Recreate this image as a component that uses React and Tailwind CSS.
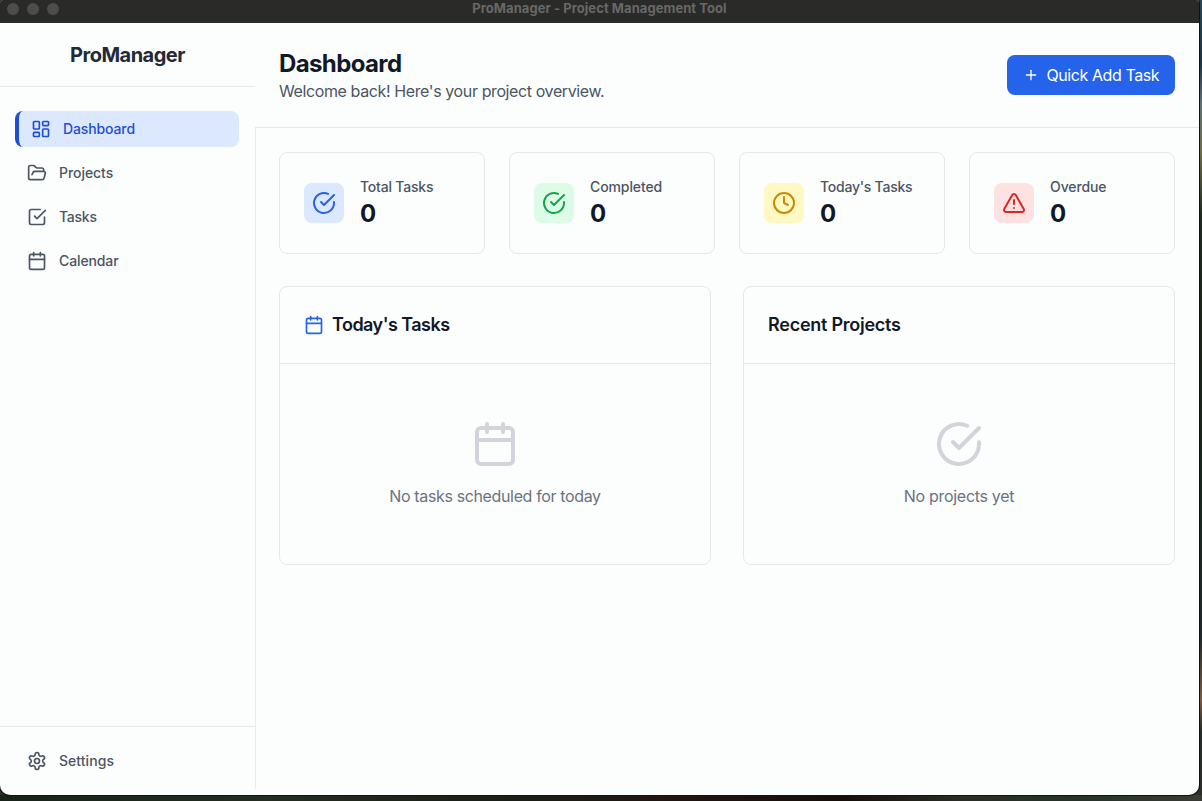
import React from "react";
import { LayoutDashboard, FolderOpen, Calendar, Plus } from "lucide-react";

function Svg({ size = 20, className = "", children }) {
  return (
    <svg width={size} height={size} viewBox="0 0 24 24" fill="none" stroke="currentColor" strokeWidth="2" strokeLinecap="round" strokeLinejoin="round" className={`shrink-0 ${className}`}>
      {children}
    </svg>
  );
}

const CheckCircle = (p) => (
  <Svg {...p}>
    <path d="M22 11.08V12a10 10 0 1 1-5.93-9.14" />
    <path d="m9 11 3 3L22 4" />
  </Svg>
);
const CheckSquare = (p) => (
  <Svg {...p}>
    <path d="m9 11 3 3L22 4" />
    <path d="M21 12v7a2 2 0 0 1-2 2H5a2 2 0 0 1-2-2V5a2 2 0 0 1 2-2h11" />
  </Svg>
);
const Clock = (p) => (
  <Svg {...p}>
    <circle cx="12" cy="12" r="10" />
    <polyline points="12 6 12 12 16 14" />
  </Svg>
);
const Alert = (p) => (
  <Svg {...p}>
    <path d="m21.73 18-8-14a2 2 0 0 0-3.48 0l-8 14A2 2 0 0 0 4 21h16a2 2 0 0 0 1.73-3Z" />
    <path d="M12 9v4" />
    <path d="M12 17h.01" />
  </Svg>
);
const Gear = (p) => (
  <Svg {...p}>
    <path d="M12.22 2h-.44a2 2 0 0 0-2 2v.18a2 2 0 0 1-1 1.73l-.43.25a2 2 0 0 1-2 0l-.15-.08a2 2 0 0 0-2.73.73l-.22.38a2 2 0 0 0 .73 2.73l.15.1a2 2 0 0 1 1 1.72v.51a2 2 0 0 1-1 1.74l-.15.09a2 2 0 0 0-.73 2.73l.22.38a2 2 0 0 0 2.73.73l.15-.08a2 2 0 0 1 2 0l.43.25a2 2 0 0 1 1 1.73V20a2 2 0 0 0 2 2h.44a2 2 0 0 0 2-2v-.18a2 2 0 0 1 1-1.73l.43-.25a2 2 0 0 1 2 0l.15.08a2 2 0 0 0 2.73-.73l.22-.39a2 2 0 0 0-.73-2.73l-.15-.08a2 2 0 0 1-1-1.74v-.5a2 2 0 0 1 1-1.74l.15-.09a2 2 0 0 0 .73-2.73l-.22-.38a2 2 0 0 0-2.73-.73l-.15.08a2 2 0 0 1-2 0l-.43-.25a2 2 0 0 1-1-1.73V4a2 2 0 0 0-2-2z" />
    <circle cx="12" cy="12" r="3" />
  </Svg>
);

function NavItem({ icon: Icon, label, active, spacing }) {
  return (
    <a className={`flex h-9 items-center gap-3 rounded-lg px-3 text-sm font-medium ${active ? "border-l-4 border-[#1d4ed8] bg-[#dbe8fe] text-[#1d4ed8]" : "text-[#4b5563]"}`}>
      <Icon size={20} className="shrink-0" />
      <span className={spacing}>{label}</span>
    </a>
  );
}

const stats = [
  { label: "Total Tasks", icon: CheckCircle, tone: "bg-[#dbe8fe] text-[#2563eb]", spacing: "tracking-[-0.2px]" },
  { label: "Completed", icon: CheckCircle, tone: "bg-[#dcfce7] text-[#16a34a]", spacing: "tracking-[-0.1px]" },
  { label: "Today's Tasks", icon: Clock, tone: "bg-[#fef9c3] text-[#ca8a04]", spacing: "tracking-[-0.25px]" },
  { label: "Overdue", icon: Alert, tone: "bg-[#fee2e2] text-[#dc2626]", spacing: "tracking-[-0.1px]" },
];

function Panel({ title, icon, spacing, emptyIcon: EmptyIcon, empty, emptySpacing }) {
  return (
    <section className="rounded-lg border border-[#e5e7eb]">
      <div className="flex h-[77px] items-center border-b border-[#e5e7eb] px-6">
        {icon}
        <h2 className={`text-lg font-semibold text-[#111827] ${spacing}`}>{title}</h2>
      </div>
      <div className="flex flex-col items-center gap-4 py-14">
        <EmptyIcon size={48} className="text-[#d1d5db]" />
        <p className={`text-base text-[#6b7280] ${emptySpacing}`}>{empty}</p>
      </div>
    </section>
  );
}

export default function App() {
  return (
    <div className="flex h-[801px] w-[1202px] flex-col overflow-hidden bg-[linear-gradient(90deg,#16241a_0%,#252c20_22%,#1a2018_40%,#20170f_55%,#150e08_70%,#2a2d26_80%,#26332a_90%,#3a3a34_100%)] font-[Inter,sans-serif] antialiased">
      <div className="h-[795px] bg-[linear-gradient(180deg,#24465c_0%,#1c3444_8%,#5f7076_13%,#6f6f45_19%,#1f2a22_27%,#1c2318_42%,#18261d_60%,#20282a_80%,#7a5a41_88%,#262b29_92%,#2c2e2b_100%)] pr-[3px]">
        <div className="flex h-[795px] flex-col overflow-hidden rounded-t-[3px] rounded-b-[10px] bg-[#fcfefe] shadow-[0_0_0_1px_#10140f]">
          <div className="flex h-[23px] shrink-0 items-start bg-[#2a2a28]">
            <div className="flex w-[250px] gap-2 pt-[3px] pl-[7px]">
              <span className="size-3 rounded-full bg-[#4d4d4b]" />
              <span className="size-3 rounded-full bg-[#4d4d4b]" />
              <span className="size-3 rounded-full bg-[#4d4d4b]" />
            </div>
            <div className="flex-1 text-center text-[13px] leading-4 font-bold tracking-[0.06px] text-[#686866]">ProManager - Project Management Tool</div>
            <div className="w-[250px]" />
          </div>
          <div className="flex min-h-0 flex-1">
            <aside className="flex w-[255px] flex-col">
              <div className="flex h-16 items-center justify-center border-b border-[#e5e7eb]">
                <h1 className="text-xl font-bold tracking-[-0.5px] text-[#1f2937]">ProManager</h1>
              </div>
              <nav className="flex flex-1 flex-col gap-2 pt-6 pr-4 pl-[15px]">
                <NavItem icon={LayoutDashboard} label="Dashboard" active spacing="tracking-[-0.12px]" />
                <NavItem icon={FolderOpen} label="Projects" spacing="tracking-[-0.05px]" />
                <NavItem icon={CheckSquare} label="Tasks" spacing="tracking-[-0.25px]" />
                <NavItem icon={Calendar} label="Calendar" spacing="tracking-[-0.12px]" />
              </nav>
              <div className="border-t border-[#e5e7eb] py-4 pr-4 pl-[15px]">
                <NavItem icon={Gear} label="Settings" spacing="tracking-[0.05px]" />
              </div>
            </aside>
            <main className="flex flex-1 flex-col">
              <header className="flex h-[105px] items-center justify-between border-b border-[#e5e7eb] px-6">
                <div>
                  <h2 className="pt-px text-2xl leading-[31px] font-bold tracking-[-0.62px] text-[#111827]">Dashboard</h2>
                  <p className="text-base leading-6 tracking-[-0.39px] text-[#4b5563]">Welcome back! Here's your project overview.</p>
                </div>
                <button className="flex h-10 w-[168.5px] items-center gap-2 rounded-lg bg-[#2563eb] pl-4 text-base whitespace-nowrap text-white">
                  <Plus size={16} className="shrink-0" />
                  <span className="tracking-[-0.42px]">Quick Add Task</span>
                </button>
              </header>
              <div className="mb-[6px] flex flex-1 flex-col gap-8 border-l border-[#e9ebee] pt-6 pr-6 pl-[23px]">
                <div className="grid grid-cols-4 gap-6">
                  {stats.map(({ label, icon: Icon, tone, spacing }) => (
                    <div key={label} className="flex h-[102px] items-center gap-4 rounded-lg border border-[#e5e7eb] px-6">
                      <div className={`flex size-10 items-center justify-center rounded-lg ${tone}`}>
                        <Icon size={24} />
                      </div>
                      <div>
                        <p className={`text-sm leading-5 font-medium text-[#4b5563] ${spacing}`}>{label}</p>
                        <p className="pt-px text-2xl leading-[31px] font-bold text-[#111827]">0</p>
                      </div>
                    </div>
                  ))}
                </div>
                <div className="grid grid-cols-2 gap-8">
                  <Panel
                    title="Today's Tasks"
                    icon={<Calendar size={20} className="mr-2 text-[#2563eb]" />}
                    spacing="tracking-[-0.53px]"
                    emptyIcon={Calendar}
                    empty="No tasks scheduled for today"
                    emptySpacing="tracking-[-0.36px]"
                  />
                  <Panel title="Recent Projects" spacing="tracking-[-0.25px]" emptyIcon={CheckCircle} empty="No projects yet" emptySpacing="tracking-[-0.3px]" />
                </div>
              </div>
            </main>
          </div>
        </div>
      </div>
    </div>
  );
}
